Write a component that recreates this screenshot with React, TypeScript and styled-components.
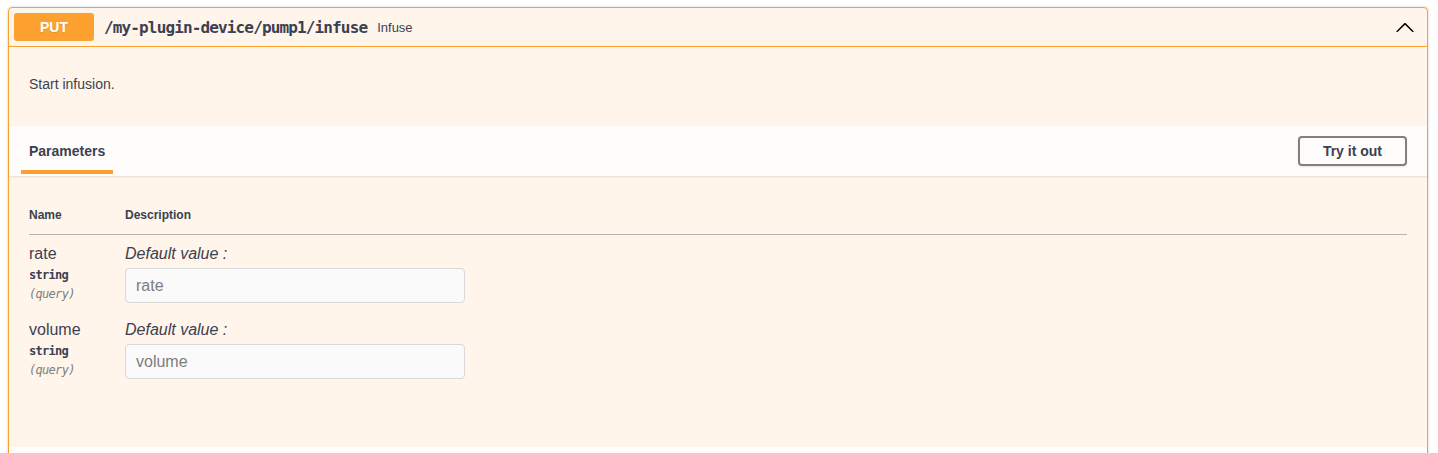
import React from "react";
import styled, { createGlobalStyle } from "styled-components";

const Global = createGlobalStyle`
  html, body { margin: 0; padding: 0; background: #fff; }
  body { padding: 7px 10px 0 8px; font-family: "Liberation Sans", Arial, sans-serif; color: #3b4151; }
  * { box-sizing: border-box; }
`;

const Opblock = styled.div`
  border: 1px solid #fca130;
  background: rgba(252, 161, 48, 0.1);
  border-radius: 4px;
  box-shadow: 0 0 3px rgba(0, 0, 0, 0.19);
  margin-bottom: 15px;
`;

const Summary = styled.div`
  display: flex;
  align-items: center;
  padding: 5px;
  border-bottom: 1px solid #fca130;
`;

const SummaryControl = styled.div`
  display: flex;
  align-items: center;
  flex: 1;
`;

const Method = styled.span`
  min-width: 80px;
  padding: 6px 0;
  border-radius: 3px;
  background: #fca130;
  color: #fff;
  font-size: 14px;
  line-height: 16px;
  font-weight: 700;
  text-align: center;
  text-shadow: 0 1px 0 rgba(0, 0, 0, 0.1);
`;

const Path = styled.span`
  padding: 0 10px;
  font-family: "DejaVu Sans Mono", monospace;
  font-size: 16px;
  font-weight: 700;
  letter-spacing: -0.86px;
  color: #3b4151;
`;

const SummaryDesc = styled.span`
  font-size: 13px;
  color: #3b4151;
`;

const ArrowBtn = styled.button`
  border: none;
  background: none;
  padding: 0;
  margin-right: 7px;
  display: flex;
  align-items: center;
  svg { display: block; }
`;

const DescWrapper = styled.div`
  padding: 15px 20px;
  margin-bottom: 4px;
  font-size: 14px;
  p { margin: 13px 0; line-height: 19px; }
`;

const SectionHeader = styled.div`
  display: flex;
  align-items: center;
  justify-content: space-between;
  min-height: 50px;
  padding: 8px 20px;
  background: rgba(255, 255, 255, 0.8);
  box-shadow: 0 1px 2px rgba(0, 0, 0, 0.1);
`;

const TabTitle = styled.h4<{ $active?: boolean }>`
  position: relative;
  margin: 0;
  font-size: 14px;
  line-height: 16px;
  font-weight: 700;
  color: #3b4151;
  &::after {
    content: "";
    display: ${(p) => (p.$active ? "block" : "none")};
    position: absolute;
    left: -10%;
    bottom: -15px;
    width: 120%;
    height: 4px;
    background: #fca130;
  }
`;

const TryButton = styled.button`
  border: 2px solid gray;
  border-radius: 4px;
  background: transparent;
  padding: 5px 23px;
  font-family: "Liberation Sans", Arial, sans-serif;
  font-size: 14px;
  line-height: 16px;
  font-weight: 700;
  color: #3b4151;
  box-shadow: 0 1px 2px rgba(0, 0, 0, 0.1);
`;

const TableContainer = styled.div`
  padding: 20px 20px 0;
`;

const Table = styled.table`
  width: 100%;
  border-collapse: collapse;
`;

const Th = styled.th<{ $w?: number }>`
  width: ${(p) => (p.$w ? `${p.$w}px` : "auto")};
  padding: 12px 0;
  text-align: left;
  font-size: 12px;
  line-height: 14px;
  font-weight: 700;
  color: #3b4151;
  border-bottom: 1px solid rgba(59, 65, 81, 0.2);
`;

const Td = styled.td`
  padding: 10px 0 0;
  vertical-align: top;
`;

const ParamName = styled.div`
  font-size: 16px;
  line-height: 18px;
  color: #3b4151;
`;

const ParamType = styled.div`
  padding: 5px 0 0;
  font-family: "DejaVu Sans Mono", monospace;
  font-size: 12px;
  line-height: 14px;
  font-weight: 700;
  letter-spacing: -0.7px;
  color: #3b4151;
`;

const ParamIn = styled.div`
  padding: 5px 0 0;
  font-family: "DejaVu Sans Mono", monospace;
  font-size: 12px;
  line-height: 14px;
  font-style: italic;
  letter-spacing: -0.7px;
  color: gray;
`;

const DefaultLabel = styled.div`
  font-size: 16px;
  line-height: 18px;
  font-style: italic;
  color: #3b4151;
`;

const Input = styled.input`
  display: block;
  width: 340px;
  height: 35px;
  margin: 5px 0 8px;
  padding: 8px 10px;
  border: 1px solid #d9d9d9;
  border-radius: 4px;
  background: #fafafa;
  font-family: "Liberation Sans", Arial, sans-serif;
  font-size: 16px;
  color: #3b4151;
  &::placeholder { color: #7d7d7d; }
`;

const ExecuteWrapper = styled.div`
  height: 60px;
`;

const params = [
  { name: "rate", type: "string", in: "query" },
  { name: "volume", type: "string", in: "query" },
];

export default function App() {
  return (
    <>
      <Global />
      <Opblock>
        <Summary>
          <SummaryControl>
            <Method>PUT</Method>
            <Path>/my-plugin-device/pump1/infuse</Path>
            <SummaryDesc>Infuse</SummaryDesc>
          </SummaryControl>
          <ArrowBtn aria-label="collapse">
            <svg width="20" height="20" viewBox="0 0 20 20">
              <path
                fill="#000"
                d="M 17.418 14.908 C 17.69 15.176 18.127 15.176 18.397 14.908 C 18.667 14.64 18.668 14.207 18.397 13.939 L 10.489 6.109 C 10.219 5.841 9.782 5.841 9.51 6.109 L 1.602 13.939 C 1.332 14.207 1.332 14.64 1.602 14.908 C 1.873 15.176 2.311 15.176 2.581 14.908 L 10 7.767 L 17.418 14.908 Z"
              />
            </svg>
          </ArrowBtn>
        </Summary>
        <DescWrapper>
          <p>Start infusion.</p>
        </DescWrapper>
        <SectionHeader>
          <TabTitle $active>Parameters</TabTitle>
          <TryButton>Try it out</TryButton>
        </SectionHeader>
        <TableContainer>
          <Table>
            <thead>
              <tr>
                <Th $w={96}>Name</Th>
                <Th>Description</Th>
              </tr>
            </thead>
            <tbody>
              {params.map((p) => (
                <tr key={p.name}>
                  <Td>
                    <ParamName>{p.name}</ParamName>
                    <ParamType>{p.type}</ParamType>
                    <ParamIn>({p.in})</ParamIn>
                  </Td>
                  <Td>
                    <DefaultLabel>Default value :</DefaultLabel>
                    <Input type="text" placeholder={p.name} disabled />
                  </Td>
                </tr>
              ))}
            </tbody>
          </Table>
        </TableContainer>
        <ExecuteWrapper />
        <SectionHeader />
      </Opblock>
    </>
  );
}
